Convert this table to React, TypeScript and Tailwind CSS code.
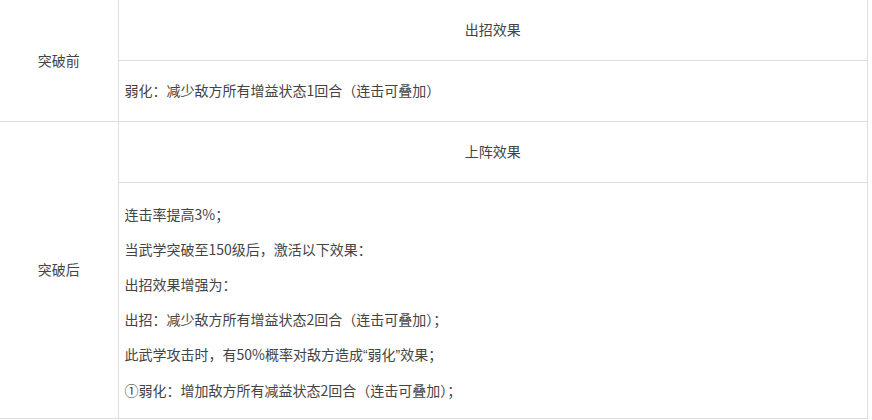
const Q = ({ c }: { c: string }) => (
  <span style={{ fontFamily: '"Liberation Sans", sans-serif' }}>{c}</span>
);

export default function App() {
  return (
    <div
      className="bg-white w-[872px] h-[420px] overflow-hidden text-[14px] text-[#444]"
      style={{ fontFamily: '"Microsoft YaHei", "Noto Sans CJK SC", sans-serif' }}
    >
      <table className="w-[868px] border-collapse table-fixed">
        <colgroup>
          <col className="w-[118px]" />
          <col />
        </colgroup>
        <tbody>
          <tr>
            <td rowSpan={2} className="border-r border-b border-[#ddd] text-center align-middle">
              突破前
            </td>
            <td className="h-[60px] border-r border-b border-[#ddd] text-center align-middle">
              出招效果
            </td>
          </tr>
          <tr>
            <td className="h-[61px] border-r border-b border-[#ddd] px-[6px] align-middle">
              弱化：减少敌方所有增益状态1回合（连击可叠加）
            </td>
          </tr>
          <tr>
            <td rowSpan={2} className="border-r border-b border-[#ddd] text-center align-middle">
              突破后
            </td>
            <td className="h-[61px] border-r border-b border-[#ddd] text-center align-middle">
              上阵效果
            </td>
          </tr>
          <tr>
            <td className="border-r border-b border-[#ddd] px-[6px] pt-[21px] pb-[17px] align-top">
              <div className="flex flex-col gap-[14px] leading-[21px]">
                <div>连击率提高3%；</div>
                <div>当武学突破至150级后，激活以下效果：</div>
                <div>出招效果增强为：</div>
                <div>出招：减少敌方所有增益状态2回合（连击可叠加）；</div>
                <div>
                  此武学攻击时，有50%概率对敌方造成<Q c="“" />弱化<Q c="”" />效果；
                </div>
                <div>①弱化：增加敌方所有减益状态2回合（连击可叠加）；</div>
              </div>
            </td>
          </tr>
        </tbody>
      </table>
    </div>
  );
}
